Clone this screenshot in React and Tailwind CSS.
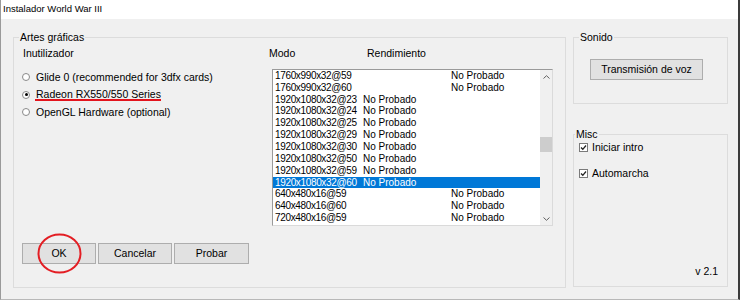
import React from "react";

// filas de la lista de modos (wide = columna ancha para el rendimiento)
const MODES = [
  { mode: "1760x990x32@59", wide: true },
  { mode: "1760x990x32@60", wide: true },
  { mode: "1920x1080x32@23", wide: false },
  { mode: "1920x1080x32@24", wide: false },
  { mode: "1920x1080x32@25", wide: false },
  { mode: "1920x1080x32@29", wide: false },
  { mode: "1920x1080x32@30", wide: false },
  { mode: "1920x1080x32@50", wide: false },
  { mode: "1920x1080x32@59", wide: false },
  { mode: "1920x1080x32@60", wide: false, selected: true },
  { mode: "640x480x16@59", wide: true },
  { mode: "640x480x16@60", wide: true },
  { mode: "720x480x16@59", wide: true },
];

function Radio({ checked }) {
  return (
    <span className="w-[8px] h-[8px] rounded-full border border-[#8a8a8a] bg-white flex items-center justify-center shrink-0">
      {checked && <span className="w-[3px] h-[3px] rounded-full bg-black" />}
    </span>
  );
}

function Check() {
  return (
    <span className="w-[9px] h-[9px] border border-[#7a7a7a] bg-white flex items-center justify-center shrink-0">
      <svg width="7" height="7" viewBox="0 0 7 7">
        <path d="M1 3.5 L2.8 5.3 L6 1.5" fill="none" stroke="#222" strokeWidth="1.3" />
      </svg>
    </span>
  );
}

function Group({ label, labelClass, className, children }) {
  return (
    <div className={"relative border border-[#dcdcdc] flex flex-col " + className}>
      <span className={"absolute -top-[7px] px-[1px] bg-[#f0f0f0] leading-[13px] " + labelClass}>{label}</span>
      {children}
    </div>
  );
}

function Button({ children, className }) {
  return (
    <button className={"h-[21px] bg-[#e1e1e1] border border-[#adadad] flex items-center justify-center text-black " + className}>
      {children}
    </button>
  );
}

export default function App() {
  return (
    <div className="w-[740px] h-[300px] bg-[#f0f0f0] flex flex-col border-r-2 border-r-[#3b3b3b] border-l border-l-[#9a9a9a] border-b border-b-[#b8b8b8] overflow-hidden text-black text-[10.5px] font-['Liberation_Sans',Arial,sans-serif]">
      {/* Title bar */}
      <div className="h-[19px] bg-white flex items-center pl-[2px] text-[9.5px] shrink-0">Instalador World War III</div>

      <div className="flex pl-[12px] pt-[18px]">
        {/* Artes gráficas */}
        <Group label="Artes gráficas" labelClass="left-[5px]" className="w-[553px] h-[251px]">
          <div className="flex pt-[8.5px]">
            <div className="w-[255px] pl-[9px]">
              <div className="leading-[13px]">Inutilizador</div>
              <div className="mt-[8.75px] flex flex-col">
                <div className="h-[17.5px] flex items-center">
                  <span className="-ml-[1px]">
                    <Radio />
                  </span>
                  <span className="ml-[6px] leading-[13px]">Glide 0 (recommended for 3dfx cards)</span>
                </div>
                <div className="h-[17.5px] flex items-center">
                  <span className="-ml-[1px]">
                    <Radio checked />
                  </span>
                  <span className="relative ml-[6px] leading-[13px]">
                    Radeon RX550/550 Series
                    <span className="absolute -left-[1px] right-0 top-[11px] h-[2px] bg-[#e3141d]" />
                  </span>
                </div>
                <div className="h-[17.5px] flex items-center">
                  <span className="-ml-[1px]">
                    <Radio />
                  </span>
                  <span className="ml-[6px] leading-[13px]">OpenGL Hardware (optional)</span>
                </div>
              </div>
            </div>

            <div className="flex flex-col">
              <div className="flex leading-[13px]">
                <span className="w-[98px]">Modo</span>
                <span>Rendimiento</span>
              </div>
              <div className="mt-[9.5px] ml-[3px] w-[281px] h-[157px] border border-t-[#9a9a9a] border-l-[#9a9a9a] border-r-[#dadada] border-b-[#dadada] bg-white flex text-[10px]">
                <div className="w-[267px] flex flex-col overflow-hidden">
                  {MODES.map((r) => (
                    <div
                      key={r.mode}
                      className={
                        "h-[11.85px] shrink-0 flex items-center pl-[2px] leading-[12px] " +
                        (r.selected ? "bg-[#0078d7] text-white" : "")
                      }>
                      <span className={"tracking-[-0.35px] shrink-0 " + (r.wide ? "w-[176px]" : "w-[88px]")}>{r.mode}</span>
                      <span>No Probado</span>
                    </div>
                  ))}
                </div>
                {/* scrollbar */}
                <div className="w-[12px] bg-[#f0f0f0] flex flex-col">
                  <div className="h-[13px] flex items-center justify-center">
                    <svg width="7" height="4" viewBox="0 0 7 4">
                      <path d="M0.5 3.5 L3.5 0.7 L6.5 3.5" fill="none" stroke="#606060" strokeWidth="1" />
                    </svg>
                  </div>
                  <div className="h-[54px]" />
                  <div className="h-[15px] bg-[#cdcdcd]" />
                  <div className="flex-1" />
                  <div className="h-[13px] flex items-center justify-center">
                    <svg width="7" height="4" viewBox="0 0 7 4">
                      <path d="M0.5 0.5 L3.5 3.3 L6.5 0.5" fill="none" stroke="#606060" strokeWidth="1" />
                    </svg>
                  </div>
                </div>
              </div>
            </div>
          </div>

          <div className="flex gap-[2px] pl-[8px] mt-[17px]">
            <div className="relative">
              <Button className="w-[74px]">OK</Button>
              <svg className="absolute left-[14px] -top-[11px] overflow-visible" width="48" height="44" viewBox="0 0 48 44">
                <ellipse cx="23.5" cy="21.5" rx="21" ry="19" fill="none" stroke="#e31e24" strokeWidth="2" />
              </svg>
            </div>
            <Button className="w-[74px]">Cancelar</Button>
            <Button className="w-[75px]">Probar</Button>
          </div>
        </Group>

        {/* columna derecha */}
        <div className="ml-[7px] w-[155px] flex flex-col">
          <Group label="Sonido" labelClass="left-[5px]" className="h-[67px]">
            <Button className="mt-[21px] ml-[16px] w-[113px]">Transmisión de voz</Button>
          </Group>

          <Group label="Misc" labelClass="left-[1px]" className="mt-[30px] h-[153px]">
            <div className="pt-[5.5px] pl-[5px] flex flex-col">
              <div className="h-[13px] flex items-center">
                <Check />
                <span className="ml-[4px] leading-[13px]">Iniciar intro</span>
              </div>
              <div className="mt-[13px] h-[13px] flex items-center">
                <Check />
                <span className="ml-[4px] leading-[13px]">Automarcha</span>
              </div>
            </div>
            <span className="mt-auto self-end mr-[9px] mb-[8px] leading-[13px]">v 2.1</span>
          </Group>
        </div>
      </div>
    </div>
  );
}
